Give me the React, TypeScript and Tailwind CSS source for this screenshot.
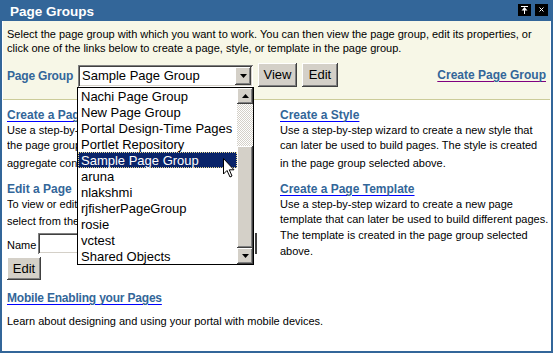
import React from "react";

const raised =
  "bg-[#d4d0c8] shadow-[inset_-1px_-1px_0_#404040,inset_1px_1px_0_#ffffff,inset_-2px_-2px_0_#808080,inset_2px_2px_0_#d4d0c8]";
const sunken =
  "bg-white shadow-[inset_1px_1px_0_#808080,inset_-1px_-1px_0_#ffffff,inset_2px_2px_0_#404040,inset_-2px_-2px_0_#d4d0c8]";

function DownTri() {
  return (
    <svg width="7" height="4" viewBox="0 0 7 4">
      <polygon points="0,0 7,0 3.5,4" fill="#000" />
    </svg>
  );
}
function UpTri() {
  return (
    <svg width="7" height="4" viewBox="0 0 7 4">
      <polygon points="0,4 7,4 3.5,0" fill="#000" />
    </svg>
  );
}

const items = [
  "Nachi Page Group",
  "New Page Group",
  "Portal Design-Time Pages",
  "Portlet Repository",
  "Sample Page Group",
  "aruna",
  "nlakshmi",
  "rjfisherPageGroup",
  "rosie",
  "vctest",
  "Shared Objects",
];

export default function App() {
  return (
    <div className="w-[553px] h-[353px] bg-white text-black font-['Liberation_Sans',Arial,sans-serif] relative overflow-hidden">
      <div className="flex flex-col h-full border-2 border-[#336699]">
        {/* title bar */}
        <div className="h-[19px] bg-[#336699] flex items-start justify-between pl-[8px] pr-[3px] shrink-0">
          <div className="text-white font-bold text-[13.5px] leading-[19px]">Page Groups</div>
          <div className="flex gap-[4px] pt-[2px]">
            <div className="w-[13px] h-[12px] bg-black">
              <svg width="13" height="12" viewBox="0 0 13 12">
                <rect x="3" y="2" width="7" height="1" fill="#fff" />
                <polygon points="6.5,3 3.5,6.5 9.5,6.5" fill="#fff" />
                <rect x="6" y="6" width="1" height="4" fill="#fff" />
              </svg>
            </div>
            <div className="w-[13px] h-[12px] bg-black">
              <svg width="13" height="12" viewBox="0 0 13 12">
                <path d="M4.5 3.5 L8.5 7.5 M8.5 3.5 L4.5 7.5" stroke="#fff" strokeWidth="1" />
              </svg>
            </div>
          </div>
        </div>

        {/* body */}
        <div className="flex-1 flex flex-col px-[1px] bg-white">
          {/* beige section */}
          <div className="bg-[#f7f7e7] border-b border-[#cccc99] pt-[6px] pb-[12px] pl-[4px] pr-[4px]">
            <div className="text-[11px] leading-[14px] whitespace-nowrap">
              Select the page group with which you want to work. You can then view the page group, edit its properties, or
              <br />
              click one of the links below to create a page, style, or template in the page group.
            </div>
            <div className="mt-[8px] h-[24px] flex items-start">
              <div className="w-[71px] mt-[5px] text-[12px] leading-[16px] font-bold text-[#336699] whitespace-nowrap tracking-[-0.2px]">
                Page Group
              </div>
              <div className={`relative mt-[2px] w-[175px] h-[22px] flex items-center ${sunken}`}>
                <div className="flex-1 pl-[4px] text-[13px] leading-[16px] whitespace-nowrap">Sample Page Group</div>
                <div className={`w-[16px] h-[18px] mr-[2px] flex items-center justify-center ${raised}`}>
                  <DownTri />
                </div>
                {/* open list */}
                <div className="absolute left-[-1px] top-[22px] w-[177px] h-[178px] border border-black bg-white z-10 flex">
                  <div className="flex-1 flex flex-col relative">
                    {items.map((it) =>
                      it === "Sample Page Group" ? (
                        <div
                          key={it}
                          className="h-[16px] pl-[2px] text-[13px] leading-[15px] whitespace-nowrap bg-[#0a246a] text-white border border-dotted border-[#e8d890]"
                        >
                          {it}
                        </div>
                      ) : (
                        <div key={it} className="h-[16px] pl-[3px] text-[13px] leading-[17px] whitespace-nowrap">
                          {it}
                        </div>
                      )
                    )}
                    {/* mouse cursor */}
                    <svg
                      className="absolute left-[145px] top-[70px]"
                      width="13"
                      height="20"
                      viewBox="0 0 13 20"
                    >
                      <polygon
                        points="0.5,0.5 0.5,16 4,12.5 7,19 9,18 6.3,11.8 11,11.8"
                        fill="#fff"
                        stroke="#000"
                        strokeWidth="1"
                      />
                    </svg>
                  </div>
                  <div className="w-[16px] flex flex-col">
                    <div className={`h-[16px] flex items-center justify-center ${raised}`}>
                      <UpTri />
                    </div>
                    <div className="h-[42px] bg-[image:repeating-conic-gradient(#d4d0c8_0_25%,#ffffff_0_50%)] bg-[length:2px_2px]" />
                    <div className={`flex-1 ${raised}`} />
                    <div className={`h-[16px] flex items-center justify-center ${raised}`}>
                      <DownTri />
                    </div>
                  </div>
                </div>
              </div>
              <div className={`ml-[5px] w-[39px] h-[24px] flex items-center justify-center text-[13px] ${raised}`}>
                View
              </div>
              <div className={`ml-[5px] w-[36px] h-[24px] flex items-center justify-center text-[13px] ${raised}`}>
                Edit
              </div>
              <a className="ml-auto mt-[4px] text-[12px] leading-[16px] font-bold text-[#336699] underline decoration-[#800080] underline-offset-[2px] whitespace-nowrap">
                Create Page Group
              </a>
            </div>
          </div>

          {/* white section */}
          <div className="flex-1 pt-[7px] pl-[4px] pr-[4px]">
            <div className="flex">
              <div className="w-[273px] shrink-0">
                <div className="w-[70px] overflow-hidden">
                  <a className="block text-[12px] leading-[16px] font-bold text-[#336699] underline decoration-[#0000ff] underline-offset-[2px] whitespace-nowrap">
                    Create a Page
                  </a>
                  <div className="text-[11px] leading-[15px] whitespace-nowrap">
                    <div>Use a step-by-step wizard to create a new page in</div>
                    <div>the page group selected above. Pages display and</div>
                    <div className="mt-[3px]">aggregate content from portlets.</div>
                  </div>
                  <div className="mt-[10px] text-[12px] leading-[16px] font-bold text-[#336699] whitespace-nowrap">
                    Edit a Page
                  </div>
                  <div className="text-[11px] leading-[15px] whitespace-nowrap">
                    <div>To view or edit a page, enter its name below, or</div>
                    <div className="mt-[2px]">select from the list of pages.</div>
                  </div>
                </div>
                <div className="mt-[4px] flex items-end">
                  <div className="w-[31px] text-[11px] leading-[15px] mb-[1px]">Name</div>
                  <div className={`w-[203px] h-[21px] ${sunken}`} />
                  <div className="w-[16px] h-[21px] border-r-2 border-[#404040]" />
                </div>
                <div className={`mt-[3px] w-[34px] h-[23px] flex items-center justify-center text-[13px] ${raised}`}>
                  Edit
                </div>
              </div>
              <div className="flex-1">
                <a className="block text-[12px] leading-[16px] font-bold text-[#336699] underline decoration-[#0000ff] underline-offset-[2px] whitespace-nowrap">
                  Create a Style
                </a>
                <div className="text-[11px] leading-[15px] whitespace-nowrap">
                  <div>Use a step-by-step wizard to create a new style that</div>
                  <div>can later be used to build pages. The style is created</div>
                  <div className="mt-[3px]">in the page group selected above.</div>
                </div>
                <a className="block mt-[10px] text-[12px] leading-[16px] font-bold text-[#336699] underline decoration-[#0000ff] underline-offset-[2px] whitespace-nowrap">
                  Create a Page Template
                </a>
                <div className="text-[11px] leading-[15px] whitespace-nowrap">
                  <div>Use a step-by-step wizard to create a new page</div>
                  <div>template that can later be used to build different pages.</div>
                  <div className="mt-[1px]">The template is created in the page group selected</div>
                  <div className="mt-[1px]">above.</div>
                </div>
              </div>
            </div>
            <a className="inline-block mt-[10px] text-[12px] leading-[16px] font-bold text-[#336699] underline decoration-[#0000ff] underline-offset-[2px] whitespace-nowrap tracking-[-0.2px]">
              Mobile Enabling your Pages
            </a>
            <div className="mt-[5px] text-[11px] leading-[15px] whitespace-nowrap">
              Learn about designing and using your portal with mobile devices.
            </div>
          </div>
        </div>
      </div>
    </div>
  );
}
